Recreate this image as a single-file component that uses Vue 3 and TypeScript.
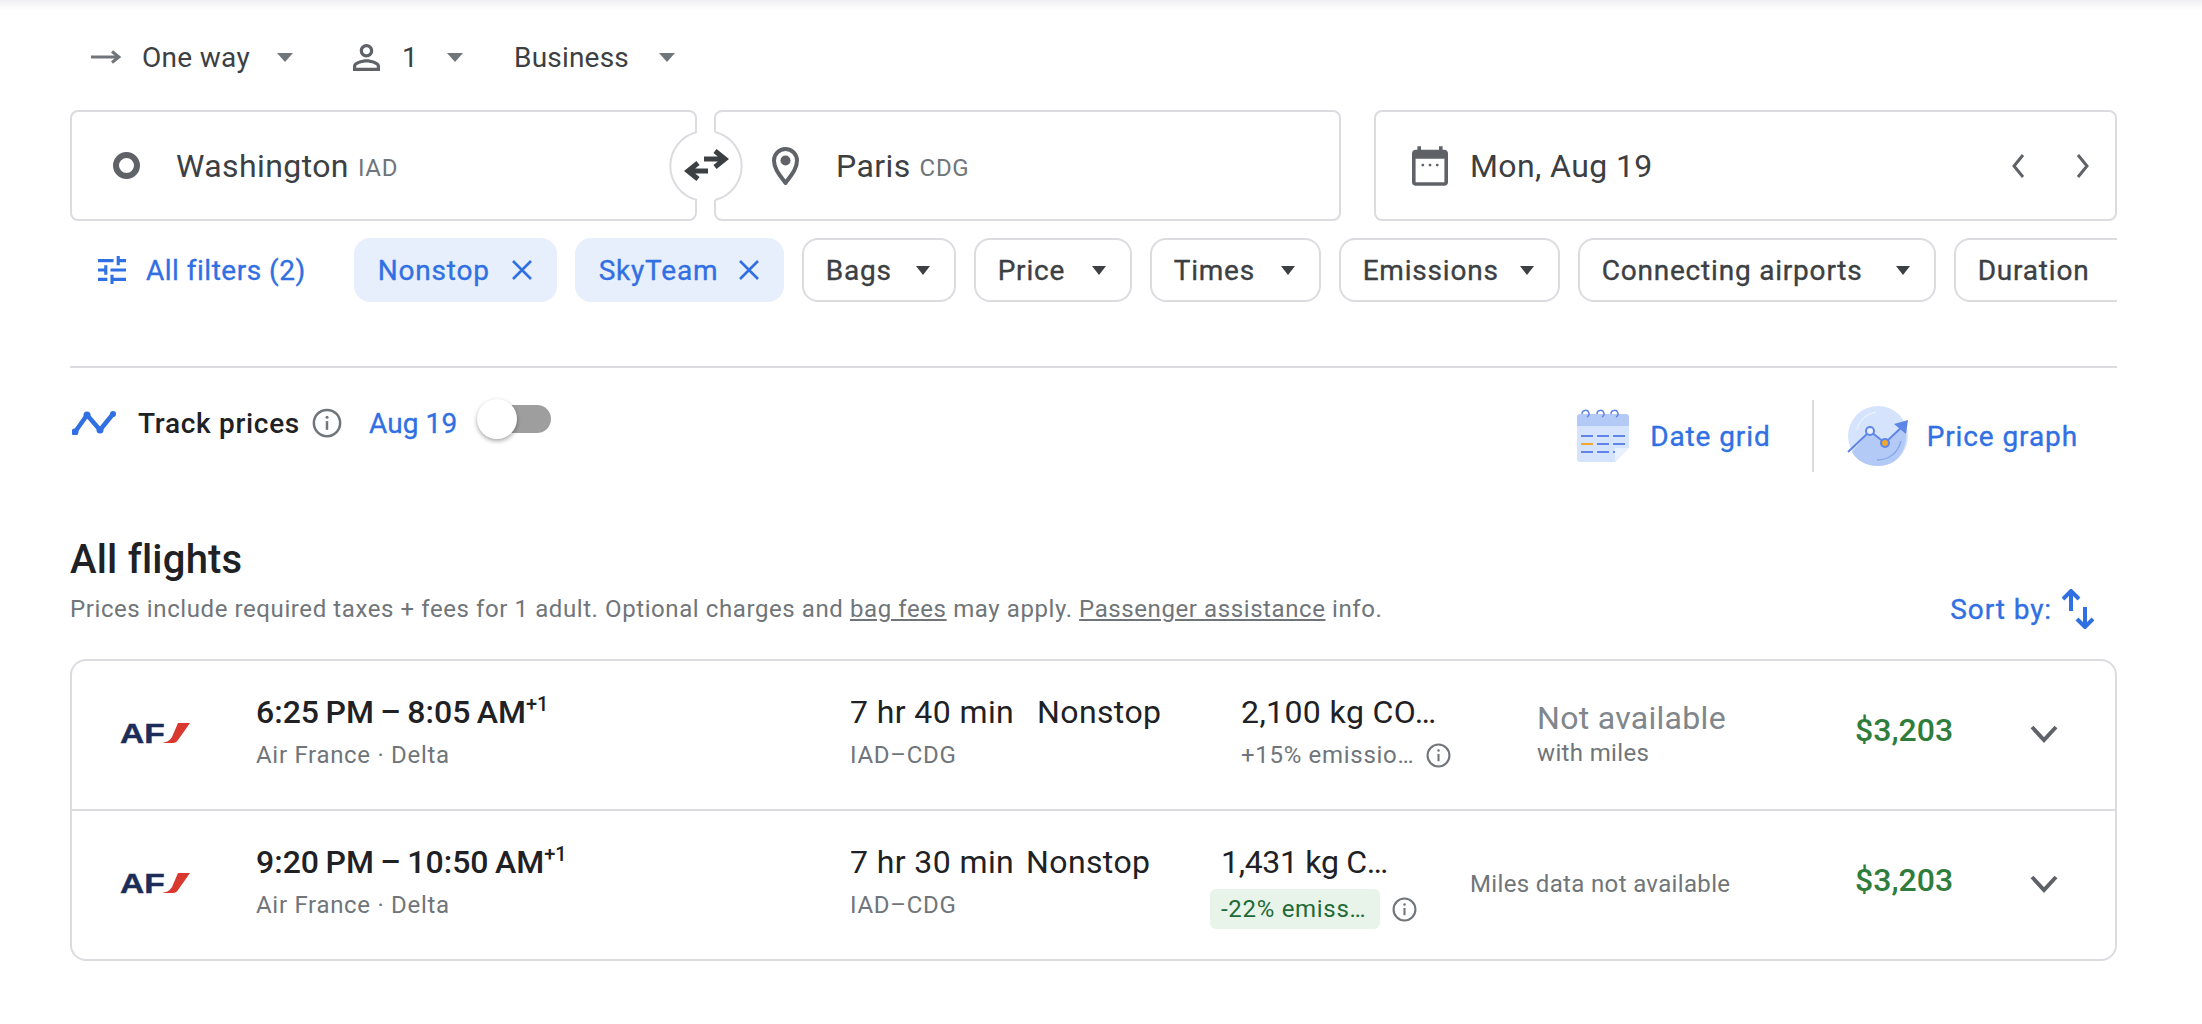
<script setup lang="ts">
interface Chip {
  label: string
  width: number
}

interface Flight {
  times: string
  duration: string
  emissions: string
  emissionNote: string
  lowEmission: boolean
  milesTitle: string
  milesSub: string
  price: string
}

const activeFilters: Chip[] = [
  { label: 'Nonstop', width: 203 },
  { label: 'SkyTeam', width: 209 }
]

const dropdowns: Chip[] = [
  { label: 'Bags', width: 154 },
  { label: 'Price', width: 158 },
  { label: 'Times', width: 171 },
  { label: 'Emissions', width: 221 },
  { label: 'Connecting airports', width: 358 },
  { label: 'Duration', width: 204 }
]

const flights: Flight[] = [
  {
    times: '6:25 PM – 8:05 AM',
    duration: '7 hr 40 min',
    emissions: '2,100 kg CO…',
    emissionNote: '+15% emissio…',
    lowEmission: false,
    milesTitle: 'Not available',
    milesSub: 'with miles',
    price: '$3,203'
  },
  {
    times: '9:20 PM – 10:50 AM',
    duration: '7 hr 30 min',
    emissions: '1,431 kg C…',
    emissionNote: '-22% emiss…',
    lowEmission: true,
    milesTitle: '',
    milesSub: 'Miles data not available',
    price: '$3,203'
  }
]
</script>

<template>
  <div class="page">
    <div class="top-shade"></div>

    <div class="trip-row">
      <div class="trip-item trip-way">
        <svg class="arrow-icon" viewBox="0 0 30 14" width="30" height="14">
          <path d="M0 7h26M21 1.500 28 7l-7 5.500" fill="none" stroke="#70757a" stroke-width="3" />
        </svg>
        <span>One way</span>
        <i class="caret"></i>
      </div>
      <div class="trip-item trip-people">
        <svg viewBox="4 4 16 16" width="27" height="27">
          <path fill="#5f6368" d="M12 5.900c1.160 0 2.100.94 2.100 2.100s-.94 2.100-2.100 2.100S9.900 9.160 9.900 8s.94-2.100 2.100-2.100m0 9c2.970 0 6.100 1.460 6.100 2.100v1.100H5.900V17c0-.64 3.130-2.100 6.100-2.100M12 4C9.790 4 8 5.790 8 8s1.790 4 4 4 4-1.790 4-4-1.790-4-4-4zm0 9c-2.670 0-8 1.340-8 4v3h16v-3c0-2.660-5.330-4-8-4z" />
        </svg>
        <span>1</span>
        <i class="caret"></i>
      </div>
      <div class="trip-item trip-class">
        <span>Business</span>
        <i class="caret"></i>
      </div>
    </div>

    <div class="search-row">
      <div class="field field-origin">
        <i class="origin-dot"></i>
        <span class="city">Washington</span>
        <span class="code">IAD</span>
      </div>
      <div class="field field-dest">
        <svg viewBox="0 0 27 38" width="27" height="38">
          <path d="M13.500 36C8 28.500 2 22 2 13.500a11.500 11.500 0 0 1 23 0C25 22 19 28.500 13.500 36z" fill="none" stroke="#5f6368" stroke-width="4" stroke-linejoin="round" />
          <circle cx="13.500" cy="13.500" r="5" fill="#5f6368" />
        </svg>
        <span class="city">Paris</span>
        <span class="code">CDG</span>
      </div>
      <div class="field field-date">
        <svg viewBox="2 1 20 22" width="36" height="40">
          <path fill="#5f6368" d="M20 3h-1V1h-2v2H7V1H5v2H4c-1.100 0-2 .9-2 2v16c0 1.100.9 2 2 2h16c1.100 0 2-.9 2-2V5c0-1.100-.9-2-2-2zm0 18H4V8h16v13z" />
          <circle cx="8" cy="11.500" r=".8" fill="#5f6368" />
          <circle cx="12" cy="11.500" r=".8" fill="#5f6368" />
          <circle cx="16" cy="11.500" r=".8" fill="#5f6368" />
        </svg>
        <span class="city">Mon, Aug 19</span>
        <div class="date-nav">
          <svg viewBox="0 0 14 26" width="14" height="26"><path d="M12 2 3 13l9 11" fill="none" stroke="#5f6368" stroke-width="3" /></svg>
          <svg viewBox="0 0 14 26" width="14" height="26"><path d="m2 2 9 11-9 11" fill="none" stroke="#5f6368" stroke-width="3" /></svg>
        </div>
      </div>
      <svg class="swap" viewBox="0 0 76 72" width="76" height="72">
        <rect x="26" y="2" width="24" height="68" fill="#fff" />
        <path d="M28 2A35 35 0 0 0 28 70" fill="#fff" stroke="#dadce0" stroke-width="2" />
        <path d="M46 2A35 35 0 0 1 46 70" fill="#fff" stroke="#dadce0" stroke-width="2" />
        <path d="M35 29h20M46 21l10 8-10 8M39 41H20M29 33l-10 8 10 8" fill="none" stroke="#3c4043" stroke-width="5" />
      </svg>
    </div>

    <div class="filter-row">
      <div class="all-filters">
        <svg viewBox="3 3 18 18" width="28" height="28">
          <path fill="#3170e3" d="M3 17v2h6v-2H3zM3 5v2h10V5H3zm10 16v-2h8v-2h-8v-2h-2v6h2zM7 9v2H3v2h4v2h2V9H7zm14 4v-2H11v2h10zm-6-4h2V7h4V5h-4V3h-2v6z" />
        </svg>
        <span>All filters (2)</span>
      </div>
      <div v-for="chip in activeFilters" :key="chip.label" class="chip chip-active" :style="{ width: chip.width + 'px' }">
        <span>{{ chip.label }}</span>
        <svg viewBox="0 0 22 22" width="22" height="22">
          <path d="M2 2l18 18M20 2 2 20" stroke="#3170e3" stroke-width="2.600" fill="none" />
        </svg>
      </div>
      <div v-for="chip in dropdowns" :key="chip.label" class="chip" :style="{ width: chip.width + 'px' }">
        <span>{{ chip.label }}</span>
        <i class="caret caret-dark"></i>
      </div>
    </div>

    <div class="divider"></div>

    <div class="track-row">
      <div class="track">
        <svg viewBox="0 0 44 24" width="44" height="24">
          <path d="M3 21 15 4l13 15L41 3" fill="none" stroke="#3170e3" stroke-width="4.500" stroke-linejoin="round" />
          <circle cx="3" cy="21" r="3.500" fill="#3170e3" />
          <circle cx="15" cy="4" r="3.500" fill="#3170e3" />
          <circle cx="28" cy="19" r="3.500" fill="#3170e3" />
          <circle cx="41" cy="3" r="3" fill="#3170e3" />
        </svg>
        <span class="track-label">Track prices</span>
        <svg class="info" viewBox="0 0 24 24" width="30" height="30">
          <circle cx="12" cy="12" r="10.500" fill="none" stroke="#70757a" stroke-width="2" />
          <path d="M12 10.500v7" stroke="#70757a" stroke-width="2" />
          <circle cx="12" cy="7.300" r="1.200" fill="#70757a" />
        </svg>
        <span class="track-date">Aug 19</span>
        <div class="toggle"><i></i></div>
      </div>

      <div class="tools">
        <div class="tool tool-grid">
          <svg viewBox="0 0 52 54" width="52" height="54">
            <path d="M3 5h46a3 3 0 0 1 3 3v9H0V8a3 3 0 0 1 3-3z" fill="#b4caf6" />
            <path d="M0 17h52v22L38 53H3a3 3 0 0 1-3-3z" fill="#d6e3fc" />
            <path d="M38 53V39h14z" fill="#e9f0fe" />
            <path d="M5 5a3.500 3.500 0 1 1 5 3M20 5a3.500 3.500 0 1 1 5 3M34 5a3.500 3.500 0 1 1 5 3" fill="none" stroke="#5f86e6" stroke-width="1.500" />
            <path d="M4 27h12M20 27h12M36 27h12M20 35h12M36 35h12M4 43h12M20 43h12M36 43h2" stroke="#5f86e6" stroke-width="2" />
            <path d="M4 35h12" stroke="#f0a830" stroke-width="2" />
          </svg>
          <span>Date grid</span>
        </div>
        <div class="tool-sep"></div>
        <div class="tool tool-graph">
          <svg viewBox="0 0 62 60" width="62" height="60">
            <ellipse cx="31" cy="30" rx="30" ry="30" fill="#d6e3fc" />
            <path d="M5 46 23 25l15 12 20-18c4 15-1 41-27 41-12 0-22-6-26-14z" fill="#b4caf6" />
            <path d="M10 24C12 14 20 8 29 6" fill="none" stroke="#e9f0fe" stroke-width="1.500" />
            <path d="M30 54c12 0 21-7 24-19" fill="none" stroke="#89a9ef" stroke-width="1.500" />
            <path d="M1 46 23 25l15 12 20-19" fill="none" stroke="#5f86e6" stroke-width="2" />
            <path d="M61 14 47 18l12 10z" fill="#5f86e6" />
            <circle cx="23" cy="25" r="4" fill="#e9f0fe" stroke="#5f86e6" stroke-width="2" />
            <circle cx="38" cy="37" r="4" fill="#f0a830" stroke="#5f86e6" stroke-width="2" />
          </svg>
          <span>Price graph</span>
        </div>
      </div>
    </div>

    <h2 class="heading">All flights</h2>
    <div class="sub-row">
      <p class="note">
        Prices include required taxes + fees for 1 adult. Optional charges and
        <u>bag fees</u> may apply. <u>Passenger assistance</u> info.
      </p>
      <div class="sort">
        <span>Sort by:</span>
        <svg viewBox="0 0 32 40" width="32" height="40">
          <path d="M9 22V2M1 10l8-8 8 8M23 18v20M15 30l8 8 8-8" fill="none" stroke="#3170e3" stroke-width="4" />
        </svg>
      </div>
    </div>

    <div class="card">
      <div v-for="(f, i) in flights" :key="f.times" class="flight" :class="{ 'flight-alt': i === 1 }">
        <div class="logo">
          <span class="logo-text">AF</span>
          <svg viewBox="0 0 28 20" width="28" height="20">
            <path d="M16 0h12L16 17c-1 2-3 3-5 3H0c6-1 8-3 10-6z" fill="#d9382e" />
          </svg>
        </div>
        <div class="cell">
          <div class="main times">{{ f.times }}<sup>+1</sup></div>
          <div class="sub">Air France · Delta</div>
        </div>
        <div class="cell">
          <div class="main dur">{{ f.duration }}</div>
          <div class="sub">IAD–CDG</div>
        </div>
        <div class="cell">
          <div class="main dur">Nonstop</div>
        </div>
        <div class="cell">
          <div class="main dur co2">{{ f.emissions }}</div>
          <div class="sub emission-line">
            <span :class="{ 'low-badge': f.lowEmission }">{{ f.emissionNote }}</span>
            <svg viewBox="0 0 24 24" width="25" height="25">
              <circle cx="12" cy="12" r="10.500" fill="none" stroke="#70757a" stroke-width="2" />
              <path d="M12 10.500v7" stroke="#70757a" stroke-width="2" />
              <circle cx="12" cy="7.300" r="1.200" fill="#70757a" />
            </svg>
          </div>
        </div>
        <div class="cell miles">
          <div v-if="f.milesTitle" class="miles-title">{{ f.milesTitle }}</div>
          <div class="miles-sub">{{ f.milesSub }}</div>
        </div>
        <div class="price">{{ f.price }}</div>
        <svg class="chevron" viewBox="0 0 28 18" width="28" height="18">
          <path d="M2 2l12 13L26 2" fill="none" stroke="#5f6368" stroke-width="4" />
        </svg>
      </div>
    </div>
  </div>
</template>

<style>
html,
body {
  margin: 0;
  background: #fff;
}
</style>

<style scoped>
.page {
  width: 2202px;
  height: 1024px;
  box-sizing: border-box;
  padding: 0 85px 0 70px;
  overflow: hidden;
  font-family: Roboto, "Noto Sans", sans-serif;
  color: #3c4043;
}

.top-shade {
  height: 10px;
  margin: 0 -85px 0 -70px;
  background: linear-gradient(#f0f0f2, #fff);
}

/* trip options */
.trip-row {
  display: flex;
  align-items: center;
  height: 40px;
  margin-top: 27px;
  font-size: 28px;
}

.trip-item {
  display: flex;
  align-items: center;
}

.trip-way {
  padding-left: 21px;
  width: 283px;
  box-sizing: border-box;
}

.trip-way span {
  margin-left: 21px;
  letter-spacing: 0.3px;
}

.trip-way .caret {
  margin-left: 27px;
}

.trip-people {
  width: 161px;
}

.trip-people span {
  margin-left: 22px;
}

.trip-people .caret {
  margin-left: 29px;
}

.trip-class span {
  letter-spacing: 0.2px;
}

.trip-class .caret {
  margin-left: 30px;
}

.caret {
  display: block;
  flex: none;
  width: 0;
  height: 0;
  border-left: 8px solid transparent;
  border-right: 8px solid transparent;
  border-top: 9px solid #70757a;
}

.caret-dark {
  border-left-width: 7px;
  border-right-width: 7px;
  border-top-color: #3c4043;
}

/* search fields */
.search-row {
  position: relative;
  display: flex;
  margin-top: 33px;
}

.field {
  display: flex;
  align-items: center;
  box-sizing: border-box;
  height: 111px;
  border: 2px solid #dadce0;
  border-radius: 8px;
}

.field-origin {
  width: 627px;
  padding-left: 41px;
}

.field-dest {
  width: 627px;
  margin-left: 17px;
  padding-left: 56px;
}

.field-dest .city {
  margin-left: 37px;
}

.field-date {
  flex: 1;
  margin-left: 33px;
  padding-left: 36px;
}

.field-date .city {
  margin-left: 22px;
}

.origin-dot {
  display: block;
  box-sizing: border-box;
  width: 27px;
  height: 27px;
  border: 6px solid #5f6368;
  border-radius: 50%;
}

.city {
  margin-left: 36px;
  font-size: 32px;
  letter-spacing: 0.4px;
}

.code {
  margin-left: 9px;
  margin-top: 4px;
  font-size: 24px;
  letter-spacing: 0.7px;
  color: #70757a;
}

.date-nav {
  display: flex;
  gap: 51px;
  margin-left: auto;
  margin-right: 25px;
}

.swap {
  position: absolute;
  left: 599px;
  top: 20px;
}

/* filter chips */
.filter-row {
  display: flex;
  align-items: center;
  gap: 18px;
  height: 64px;
  margin-top: 17px;
  overflow: hidden;
  font-size: 28px;
  letter-spacing: 0.8px;
  -webkit-text-stroke: 0.35px currentColor;
}

.all-filters {
  display: flex;
  align-items: center;
  flex: none;
  gap: 20px;
  margin-right: 30px;
  padding-left: 28px;
  letter-spacing: 0.5px;
  color: #3170e3;
}

.chip {
  display: flex;
  align-items: center;
  justify-content: space-between;
  flex: none;
  box-sizing: border-box;
  height: 64px;
  padding: 0 24px 0 22px;
  border: 2px solid #dadce0;
  border-radius: 16px;
  white-space: nowrap;
}

.chip-active {
  padding: 0 24px;
  border: none;
  background: #e8effc;
  color: #3170e3;
}

.divider {
  height: 2px;
  margin-top: 64px;
  background: #dadce0;
}

/* track row */
.track-row {
  display: flex;
  justify-content: space-between;
  margin-top: 32px;
}

.track {
  display: flex;
  align-items: center;
  height: 46px;
  padding-left: 2px;
  font-size: 28px;
  font-weight: 500;
}

.track-label {
  margin-left: 22px;
  letter-spacing: 0.7px;
  color: #202124;
}

.info {
  margin-left: 12px;
}

.track-date {
  margin-left: 27px;
  font-weight: 400;
  letter-spacing: 0.1px;
  -webkit-text-stroke: 0.35px currentColor;
  color: #3170e3;
}

.toggle {
  position: relative;
  width: 71px;
  height: 28px;
  margin-left: 23px;
  margin-bottom: 8px;
  border-radius: 14px;
  background: #9e9e9e;
}

.toggle i {
  position: absolute;
  left: -3px;
  top: -6px;
  width: 40px;
  height: 40px;
  border-radius: 50%;
  background: #fff;
  box-shadow: 0 2px 4px rgba(0, 0, 0, 0.35);
}

.tools {
  display: flex;
  align-items: center;
  height: 72px;
  margin-right: 39px;
  font-size: 28px;
  letter-spacing: 0.9px;
  -webkit-text-stroke: 0.35px currentColor;
  color: #3170e3;
}

.tool {
  display: flex;
  align-items: center;
}

.tool-grid {
  gap: 21px;
}

.tool-graph {
  gap: 18px;
}

.tool-sep {
  width: 2px;
  height: 72px;
  margin: 0 33px 0 41px;
  background: #dadce0;
}

/* heading */
.heading {
  margin: 64px 0 0;
  font-size: 40px;
  font-weight: 500;
  line-height: 48px;
  letter-spacing: 0.2px;
  color: #202124;
}

.sub-row {
  display: flex;
  justify-content: space-between;
  align-items: center;
  height: 32px;
  margin-top: 9px;
}

.note {
  margin: 0;
  font-size: 24px;
  line-height: 32px;
  letter-spacing: 0.59px;
  color: #70757a;
}

.sort {
  display: flex;
  align-items: center;
  gap: 10px;
  margin-right: 23px;
  font-size: 28px;
  letter-spacing: 0.9px;
  -webkit-text-stroke: 0.35px currentColor;
  color: #3170e3;
}

/* flights card */
.card {
  margin-top: 34px;
  border: 2px solid #dadce0;
  border-radius: 16px;
}

.flight {
  display: grid;
  grid-template-columns: 136px 594px 187px 204px 296px 318px 150px 1fr;
  box-sizing: border-box;
  height: 148px;
  padding-left: 48px;
}

.flight + .flight {
  height: 150px;
  border-top: 2px solid #dadce0;
}

.flight-alt {
  grid-template-columns: 136px 594px 176px 195px 249px 385px 150px 1fr;
}

.logo {
  display: flex;
  align-items: flex-start;
  padding-top: 62px;
}

.logo-text {
  flex: none;
  width: 37px;
  font-family: "Liberation Sans", sans-serif;
  font-size: 28px;
  font-weight: 700;
  line-height: 21px;
  color: #1c2d5a;
  -webkit-text-stroke: 0.4px currentColor;
  transform: scaleX(1.2);
  transform-origin: left center;
}

.logo svg {
  flex: none;
  margin-left: 5px;
}

.main {
  padding-top: 31px;
  font-size: 30px;
  line-height: 40px;
  font-weight: 500;
  white-space: nowrap;
  color: #202124;
}

.times {
  font-size: 32px;
  word-spacing: -1.500px;
}

.main sup {
  font-size: 20px;
  line-height: 0;
}

.dur {
  font-size: 32px;
  font-weight: 400;
  letter-spacing: 0.4px;
}

.flight-alt .co2 {
  letter-spacing: -0.3px;
}

.sub {
  margin-top: 7px;
  font-size: 24px;
  line-height: 32px;
  letter-spacing: 0.7px;
  white-space: nowrap;
  color: #70757a;
}

.emission-line {
  display: flex;
  align-items: center;
  gap: 12px;
}

.low-badge {
  box-sizing: border-box;
  height: 40px;
  margin-left: -11px;
  padding: 0 14px 0 11px;
  border-radius: 6px;
  background: #e8f3ea;
  line-height: 40px;
  color: #1e6b35;
}

.miles {
  padding-top: 37px;
}

.miles-title {
  font-size: 32px;
  line-height: 40px;
  letter-spacing: 0.3px;
  color: #80868b;
}

.miles-sub {
  margin-top: -1px;
  font-size: 24px;
  line-height: 32px;
  letter-spacing: 0.35px;
  white-space: nowrap;
  color: #70757a;
}

.flight-alt .miles {
  padding-top: 58px;
}

.price {
  padding-top: 49px;
  font-size: 32px;
  line-height: 40px;
  font-weight: 500;
  color: #2f7d3c;
}

.chevron {
  margin: 64px 0 0 25px;
}
</style>
